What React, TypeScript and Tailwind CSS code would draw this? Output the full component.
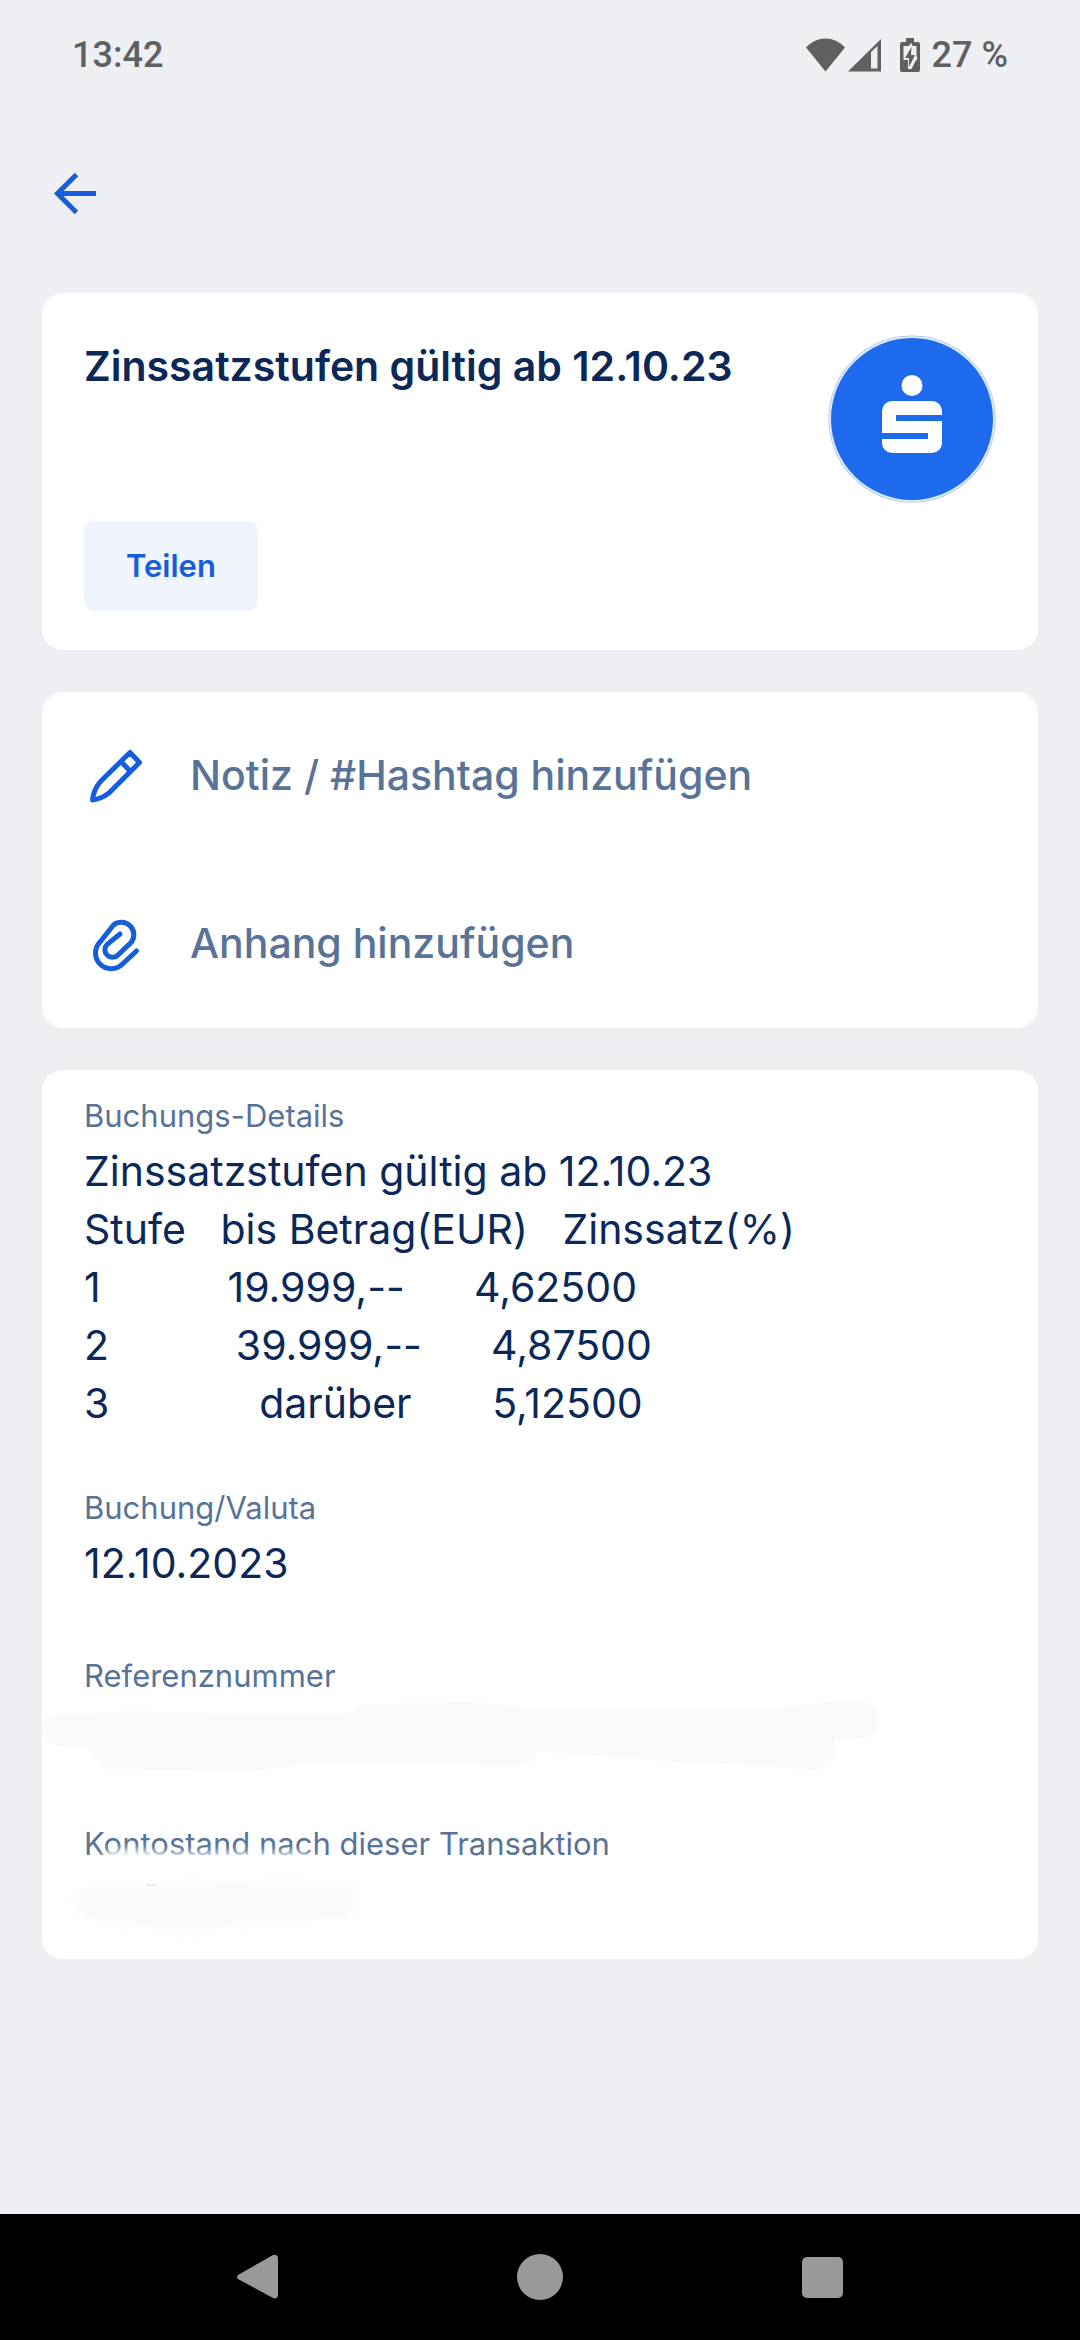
import type { ReactNode } from "react";

const details = [
  "Zinssatzstufen gültig ab 12.10.23",
  "Stufe   bis Betrag(EUR)   Zinssatz(%)",
  "1           19.999,--      4,62500",
  "2           39.999,--      4,87500",
  "3             darüber       5,12500",
];

function Card({ className = "", children }: { className?: string; children: ReactNode }) {
  return <section className={`rounded-[21px] bg-white ${className}`}>{children}</section>;
}

function StatusBar() {
  return (
    <header className="flex h-[110px] items-center justify-between px-[72px] font-['Roboto',sans-serif] text-[36px] font-medium text-[#5f6062]">
      <span>13:42</span>
      <div className="flex items-center">
        <svg className="mr-[3px] h-[34px] w-[39px]" viewBox="0 0 39 34" fill="currentColor">
          <path d="M0 9.5Q8.5 .5 19.5 .5T39 9.500L19.500 33.500z" />
        </svg>
        <svg className="mr-[19px] h-[34px] w-[33px]" viewBox="0 0 33 34" fill="currentColor">
          <path fillRule="evenodd" d="M0 33.500L33 1V33.500zM23 14V30.500H29.500V8z" />
        </svg>
        <svg className="mr-[12px] h-[34px] w-[20px]" viewBox="0 0 20 34" fill="currentColor">
          <path d="M6 0h8v4h4q2 0 2 2v26q0 2-2 2H2q-2 0-2-2V6q0-2 2-2h4z" />
          <path d="M3.500 8h5l3-3 1 3h4v9l1 4-2 2-4 8H8V22H3.500z" fill="#eeeff3" />
          <path d="M11.500 9L5 20h4v9l6-12h-4z" />
        </svg>
        <span>27 %</span>
      </div>
    </header>
  );
}

function Logo() {
  return (
    <svg className="size-[168px] shrink-0" viewBox="0 0 168 168" role="img" aria-label="Sparkasse">
      <circle cx="84" cy="84" r="83.500" fill="#8fb1ec" />
      <circle cx="84" cy="84" r="83" fill="#dfeaf8" />
      <circle cx="84" cy="84" r="81" fill="#1e6aed" />
      <circle cx="84" cy="50.500" r="10.500" fill="#fff" />
      <path
        fill="#fff"
        d="M64 66h40a10 10 0 0 1 10 10v4H68v6h46v22a10 10 0 0 1-10 10H64a10 10 0 0 1-10-10v-4h46v-6H54V76a10 10 0 0 1 10-10z"
      />
    </svg>
  );
}

function PencilIcon() {
  return (
    <svg className="size-[64px] text-[#155ddb]" viewBox="0 0 64 64" fill="none" stroke="currentColor" strokeWidth="5" strokeLinejoin="round">
      <path d="M8.500 56Q9.500 46 16 38L46 8.500L55.500 18.500L25 49Q17 55 8.500 56z" />
      <path d="M37 17.500L46.500 27.500" />
    </svg>
  );
}

function ClipIcon() {
  return (
    <svg className="size-[64px] text-[#155ddb]" viewBox="0 0 64 64" fill="none" stroke="currentColor" strokeWidth="5" strokeLinecap="round">
      <path d="M52.500 39L38.500 52A15.500 15.500 0 0 1 16 30L29.500 13A12.500 12.500 0 0 1 47.500 30L34 43A7.500 7.500 0 0 1 23 32.500L36 22" />
    </svg>
  );
}

function Action({ icon, label }: { icon: ReactNode; label: string }) {
  return (
    <button className="flex h-[168px] w-full items-center gap-[42px] px-[42px] text-left text-[41px] font-medium text-[#587397]">
      {icon}
      {label}
    </button>
  );
}

function Detail({ label, children }: { label: string; children?: ReactNode }) {
  return (
    <div>
      <dt className="text-[31px] leading-[52px] text-[#587397]">{label}</dt>
      <dd className="relative min-h-[66px] text-[41px] leading-[58px] whitespace-pre text-[#0b2859]">{children}</dd>
    </div>
  );
}

// brush strokes that hide the account data
function ReferenceSmear() {
  return (
    <svg className="absolute top-0 -left-[42px] h-[72px] w-[840px] overflow-visible" viewBox="0 0 840 72">
      <path
        fill="#fafafa"
        d="M0 29Q2 12 12 12L93 9L240 12H305Q314 3 326 2L426 0L523 7H707L799-1Q826-3 833 6Q840 18 833 30Q827 38 793 37V54Q790 66 776 68L707 64L569 56L495 49Q492 63 480 64L265 63L208 69L64 67Q56 64 50 49L7 42Q1 39 0 29z"
      />
    </svg>
  );
}

function BalanceSmear() {
  return (
    <svg className="absolute top-0 -left-[42px] h-[72px] w-[360px] overflow-visible" viewBox="0 0 360 72">
      <path className="blur-[4px]" fill="#fff" d="M60-17Q80-24 120-17H250Q270-18 278-10V8H60z" />
      <path
        className="blur-[3px]"
        fill="#fafafa"
        d="M31 35Q36 17 47 15L120 14L179 10L311 14Q320 32 308 50L208 55L144 65L41 50z"
      />
      <path d="M104 15H114" stroke="#d8d8d8" strokeWidth="1" />
    </svg>
  );
}

export default function App() {
  return (
    <div className="flex min-h-screen flex-col bg-[#eeeff3] font-['Inter',sans-serif]">
      <StatusBar />

      <nav className="flex h-[183px] items-start px-[42px] pt-[51px]">
        <button aria-label="Zurück" className="text-[#155ddb]">
          <svg className="size-[64px]" viewBox="0 0 64 64" fill="none" stroke="currentColor" strokeWidth="5">
            <path d="M54 32.500H15M34.500 13.500L15.500 32.500l19 19" />
          </svg>
        </button>
      </nav>

      <main className="flex flex-1 flex-col gap-[42px] px-[42px]">
        <Card className="px-[42px] pt-[42px] pb-[39px]">
          <div className="flex items-start justify-between">
            <h1 className="text-[41px] leading-[62px] font-semibold text-[#0b2859]">
              Zinssatzstufen gültig ab 12.10.23
            </h1>
            <Logo />
          </div>
          <button className="mt-[18px] h-[90px] rounded-[10px] bg-[#eff4fe] px-[42px] text-[31px] font-semibold text-[#155ddb]">
            Teilen
          </button>
        </Card>

        <Card>
          <Action label="Notiz / #Hashtag hinzufügen" icon={<PencilIcon />} />
          <Action label="Anhang hinzufügen" icon={<ClipIcon />} />
        </Card>

        <Card className="px-[42px] pt-[20px] pb-[23px]">
          <dl className="flex flex-col gap-[50px]">
            <Detail label="Buchungs-Details">{details.join("\n")}</Detail>
            <Detail label="Buchung/Valuta">12.10.2023</Detail>
            <Detail label="Referenznummer">
              <ReferenceSmear />
            </Detail>
            <Detail label="Kontostand nach dieser Transaktion">
              <BalanceSmear />
            </Detail>
          </dl>
        </Card>
      </main>

      <footer className="flex h-[126px] items-center justify-center bg-black text-[#999]">
        <button aria-label="Zurück" className="flex w-[282px] justify-center">
          <svg className="size-[48px]" viewBox="0 0 48 48" fill="currentColor">
            <path d="M4 22L39 2q4-1 5 3v37q-1 5-5 3L4 26q-2-2 0-4z" />
          </svg>
        </button>
        <button aria-label="Startbildschirm" className="flex w-[282px] justify-center">
          <span className="size-[46px] rounded-full bg-[#999]" />
        </button>
        <button aria-label="Übersicht" className="flex w-[282px] justify-center">
          <span className="size-[41px] rounded-[5px] bg-[#999]" />
        </button>
      </footer>
    </div>
  );
}
